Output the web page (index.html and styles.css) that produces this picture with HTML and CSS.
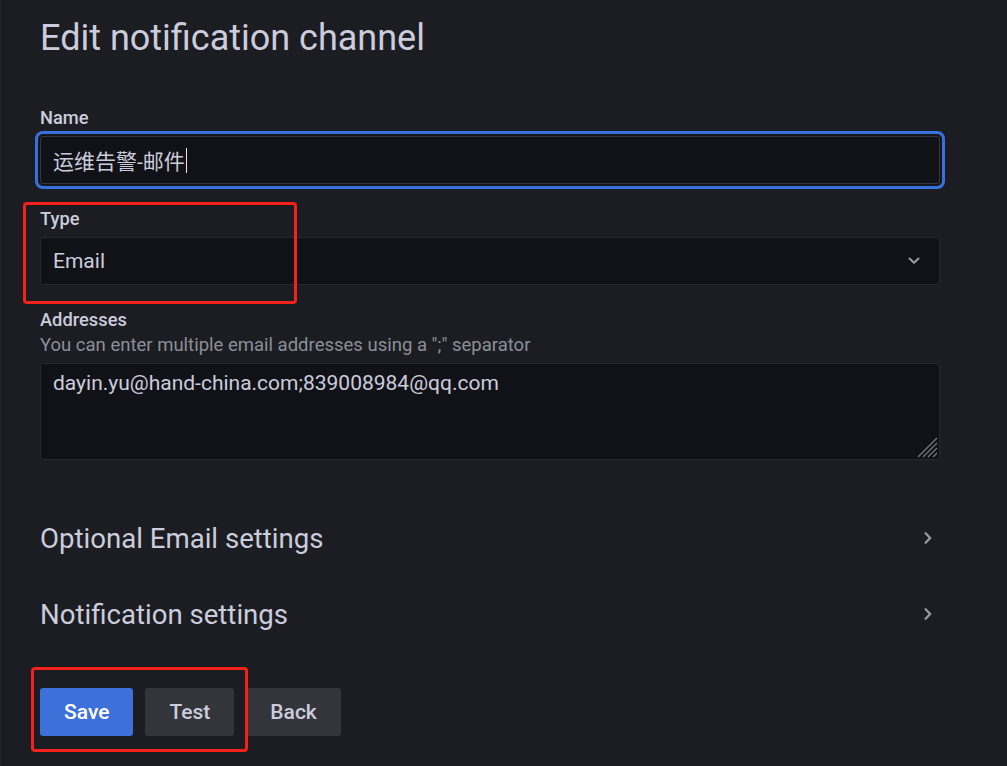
FILE: index.html
```html
<!DOCTYPE html>
<html lang="en">
<head>
<meta charset="utf-8">
<title>Edit notification channel</title>
<link rel="stylesheet" href="styles.css">
</head>
<body>
<div class="frame">
  <div class="edge"></div>
  <main class="page">
    <h1 class="title">Edit notification channel</h1>
    <form class="form">
      <div class="field">
        <label class="label">Name</label>
        <div class="input input-focused"><span class="value">运维告警-邮件</span><span class="caret"></span></div>
      </div>
      <div class="field">
        <label class="label">Type</label>
        <div class="input select">
          <span class="value">Email</span>
          <svg class="chev-down" width="12" height="8" viewBox="0 0 12 8"><path d="M1.5 1.5 L6 5.8 L10.5 1.5" fill="none" stroke="#9a9ba6" stroke-width="2" stroke-linecap="round" stroke-linejoin="round"/></svg>
        </div>
      </div>
      <div class="field field-last">
        <label class="label">Addresses</label>
        <div class="desc">You can enter multiple email addresses using a ";" separator</div>
        <div class="textarea">
          <span class="value">dayin.yu@hand-china.com;839008984@qq.com</span>
          <svg class="resize" width="22" height="22" viewBox="0 0 22 22">
            <g stroke="#75767f" stroke-width="1.2">
              <line x1="2" y1="21" x2="21" y2="2"/>
              <line x1="7" y1="21" x2="21" y2="7"/>
              <line x1="12" y1="21" x2="21" y2="12"/>
              <line x1="17" y1="21" x2="21" y2="17"/>
            </g>
          </svg>
        </div>
      </div>
      <div class="collapse">
        <span class="collapse-title">Optional Email settings</span>
        <svg class="chev-right" width="8" height="12" viewBox="0 0 8 12"><path d="M1.6 1.2 L6.2 6 L1.6 10.8" fill="none" stroke="#9a9ba6" stroke-width="2.2" stroke-linecap="round" stroke-linejoin="round"/></svg>
      </div>
      <div class="collapse">
        <span class="collapse-title">Notification settings</span>
        <svg class="chev-right" width="8" height="12" viewBox="0 0 8 12"><path d="M1.6 1.2 L6.2 6 L1.6 10.8" fill="none" stroke="#9a9ba6" stroke-width="2.2" stroke-linecap="round" stroke-linejoin="round"/></svg>
      </div>
      <div class="actions">
        <button type="button" class="btn btn-primary">Save</button>
        <button type="button" class="btn btn-secondary">Test</button>
        <button type="button" class="btn btn-secondary">Back</button>
      </div>
    </form>
  </main>
  <div class="annot annot-type"></div>
  <div class="annot annot-buttons"></div>
</div>
</body>
</html>
```

FILE: styles.css
```css
* { box-sizing: border-box; }

html, body {
  margin: 0;
  padding: 0;
  background: #1b1d22;
  height: 100%;
  overflow: hidden;
}

body {
  font-family: Roboto, "Noto Sans CJK SC", "Liberation Sans", sans-serif;
  color: #ccccdc;
}

.frame {
  position: relative;
  display: flex;
  min-height: 766px;
}

.edge {
  width: 4px;
  background: #1f2126;
  border-right: 1px solid #131418;
  flex: none;
}

.page {
  padding-left: 36px;
  width: 940px;
}

.title {
  margin: 0;
  padding-top: 18px;
  font-size: 36px;
  line-height: 40px;
  font-weight: 400;
  color: #ccccdc;
}

.form {
  margin-top: 49px;
  width: 900px;
}

.field {
  margin-bottom: 24px;
}

.field-last {
  margin-bottom: 40px;
}

.label {
  display: block;
  font-size: 18.3px;
  line-height: 22px;
  font-weight: 500;
  color: #ccccdc;
  margin-bottom: 7px;
}

.desc {
  font-size: 18.5px;
  line-height: 22px;
  color: #8d8e99;
  margin-top: -4px;
  margin-bottom: 7px;
}

.input {
  display: flex;
  align-items: center;
  height: 48px;
  padding: 0 12px;
  background: #111217;
  border: 1px solid #26282d;
  border-radius: 3px;
  font-size: 21px;
  color: #ccccdc;
}

.input-focused {
  border-color: #34363c;
  box-shadow: 0 0 0 2px #15161a, 0 0 0 5px #3871dc;
  border-radius: 3px;
}

.caret {
  display: inline-block;
  width: 1px;
  height: 25px;
  background: #e6e6ee;
  margin-left: 1px;
}

.select {
  justify-content: space-between;
  padding-right: 19px;
}

.textarea {
  position: relative;
  height: 97px;
  padding: 5px 12px;
  background: #111217;
  border: 1px solid #26282d;
  border-radius: 3px;
  font-size: 21px;
  line-height: 28px;
  color: #ccccdc;
}

.resize {
  position: absolute;
  right: 1px;
  bottom: 1px;
}

.collapse {
  display: flex;
  align-items: center;
  justify-content: space-between;
  height: 76px;
  padding-right: 8px;
}

.collapse-title {
  font-size: 27.6px;
  font-weight: 400;
  color: #ccccdc;
}

.actions {
  display: flex;
  gap: 12px;
  margin-top: 36px;
}

.btn {
  height: 48px;
  padding: 0 24px;
  border: none;
  border-radius: 3px;
  font-family: Roboto, "Liberation Sans", sans-serif;
  font-size: 21px;
  font-weight: 500;
  cursor: pointer;
}

.btn-primary {
  background: #3d71d9;
  color: #ffffff;
}

.btn-secondary {
  background: #34353b;
  color: #ccccdc;
}

.annot {
  position: absolute;
  border: 3px solid #f4221a;
  border-radius: 4px;
  pointer-events: none;
}

.annot-type {
  left: 23px;
  top: 202px;
  width: 274px;
  height: 102px;
}

.annot-buttons {
  left: 31px;
  top: 667px;
  width: 217px;
  height: 85px;
}
```
